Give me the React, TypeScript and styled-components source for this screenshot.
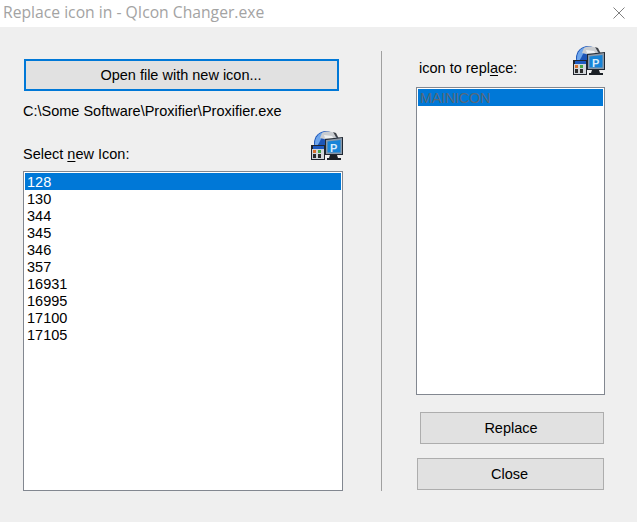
import React from "react";
import styled, { createGlobalStyle } from "styled-components";

const Global = createGlobalStyle`
  html, body { margin: 0; padding: 0; background: #efefef; }
  * { box-sizing: border-box; }
  body { font-family: "Liberation Sans", Arial, sans-serif; font-size: 14.5px; color: #000; }
`;

const Window = styled.div`
  width: 637px;
  height: 522px;
  display: flex;
  flex-direction: column;
  overflow: hidden;
  background: #efefef;
`;

const TitleBar = styled.div`
  height: 27px;
  flex: none;
  background: #fff;
  display: flex;
  align-items: center;
  justify-content: space-between;
  padding: 0 12px 3px 3px;
`;

const Title = styled.span`
  font-family: "Open Sans", sans-serif;
  font-size: 15.7px;
  color: #a3a3a3;
  line-height: 24px;
`;

const CloseGlyph = styled.svg`
  width: 12px;
  height: 12px;
  display: block;
  margin-top: 1px;
`;

const Body = styled.div`
  flex: 1;
  display: flex;
  align-items: flex-start;
  padding-left: 23px;
`;

const LeftColumn = styled.div`
  width: 320px;
  padding-top: 32px;
  display: flex;
  flex-direction: column;
`;

const Divider = styled.div`
  width: 1px;
  height: 440px;
  margin: 24px 34px 0 38px;
  background: #a0a0a0;
`;

const RightColumn = styled.div`
  width: 189px;
  padding-top: 19px;
  display: flex;
  flex-direction: column;
`;

const Button = styled.button<{ $w: number; $primary?: boolean }>`
  width: ${(p) => p.$w}px;
  height: 32px;
  align-self: flex-end;
  margin: 0;
  padding: 0 ${(p) => (p.$primary ? 1 : 2)}px 0 0;
  background: #e1e1e1;
  border: ${(p) => (p.$primary ? "2px solid #0078d7" : "1px solid #adadad")};
  font-family: "Liberation Sans", Arial, sans-serif;
  font-size: 14.5px;
  color: #000;
`;

const OpenButton = styled(Button)`
  align-self: flex-start;
  margin-left: 1px;
`;

const ReplaceButton = styled(Button)`
  margin: 17px 1px 0 0;
`;

const CloseButton = styled(Button)`
  margin: 14px 1px 0 0;
`;

const PathText = styled.div`
  margin-top: 12px;
  line-height: 17px;
`;

const ListHeader = styled.div<{ $h: number; $top: number }>`
  height: ${(p) => p.$h}px;
  padding-top: ${(p) => p.$top}px;
  display: flex;
  align-items: flex-start;
  justify-content: space-between;
`;

const Label = styled.label<{ $top: number; $left: number }>`
  margin: ${(p) => p.$top}px 0 0 ${(p) => p.$left}px;
  line-height: 17px;
`;

const Mnemonic = styled.u`
  text-underline-offset: 2px;
`;

const ListBox = styled.div<{ $h: number }>`
  height: ${(p) => p.$h}px;
  background: #fff;
  border: 1px solid #828790;
  padding: 1px;
`;

const Row = styled.div<{ $selected?: boolean; $dim?: boolean }>`
  height: 17px;
  line-height: 19px;
  padding-left: 2px;
  background: ${(p) => (p.$selected ? "#0078d7" : "transparent")};
  color: ${(p) => (p.$dim ? "#56687a" : p.$selected ? "#fff" : "#000")};
  letter-spacing: ${(p) => (p.$dim ? "-0.3px" : "0")};
  overflow: hidden;
`;

const IconSvg = styled.svg`
  display: block;
  flex: none;
  margin-right: -2px;
`;

const AppIcon = () => (
  <IconSvg width="34" height="30" viewBox="0 0 34 30" aria-hidden="true">
    <circle cx="15" cy="12" r="12" fill="#1c55b8" />
    <path d="M4 12C4 6 8 2 13 1l-2 5-3 6-2 3-2-1z" fill="#6ea6ec" />
    <path d="M11 2c4-2 10-2 13 1l3 8-6 0-8-3-4-1z" fill="#c9ccd0" />
    <path d="M22 1l3 1 3 6-3-2z" fill="#3e4248" />
    <path d="M13 4l8 1 2 3-9-1z" fill="#eef0f2" />
    <rect x="0" y="14" width="14" height="15" fill="#20242c" />
    <rect x="2" y="15" width="11" height="3" fill="#1d59c0" />
    <rect x="1" y="18" width="12" height="10" fill="#d2d6da" />
    <rect x="2" y="19" width="3" height="3" fill="#d9702c" />
    <rect x="7" y="19" width="3" height="3" fill="#48a648" />
    <rect x="2" y="23" width="3" height="4" fill="#2c2c2c" />
    <rect x="7" y="23" width="3" height="4" fill="#2c2c2c" />
    <path d="M14 8l18-2v18l-18 0z" fill="#1f2731" />
    <path d="M15 9l16-2v16h-16z" fill="#8a98a8" />
    <path d="M16.500 10.500l13-1.500v12.500h-13z" fill="#1784d8" />
    <text x="19" y="20.500" fontFamily="Liberation Sans" fontWeight="700" fontSize="11" fill="#d7ecfb">P</text>
    <path d="M19 24h7l1 3h3v2h-14v-2h2z" fill="#1b2026" />
  </IconSvg>
);

const leftItems = ["128", "130", "344", "345", "346", "357", "16931", "16995", "17100", "17105"];

export default function App() {
  return (
    <Window>
      <Global />
      <TitleBar>
        <Title>Replace icon in - QIcon Changer.exe</Title>
        <CloseGlyph viewBox="0 0 12 12">
          <path d="M0.5 0.5l11 11M11.5 0.5l-11 11" stroke="#808080" strokeWidth="1" fill="none" />
        </CloseGlyph>
      </TitleBar>
      <Body>
        <LeftColumn>
          <OpenButton $w={315} $primary>Open file with new icon...</OpenButton>
          <PathText>C:\Some Software\Proxifier\Proxifier.exe</PathText>
          <ListHeader $h={51} $top={11}>
            <Label $top={15} $left={0}>Select <Mnemonic>n</Mnemonic>ew Icon:</Label>
            <AppIcon />
          </ListHeader>
          <ListBox $h={320}>
            {leftItems.map((item, i) => (
              <Row key={item} $selected={i === 0}>{item}</Row>
            ))}
          </ListBox>
        </LeftColumn>
        <Divider />
        <RightColumn>
          <ListHeader $h={41} $top={0}>
            <Label $top={14} $left={3}>icon to repl<Mnemonic>a</Mnemonic>ce:</Label>
            <AppIcon />
          </ListHeader>
          <ListBox $h={308}>
            <Row $selected $dim>MAINICON</Row>
          </ListBox>
          <ReplaceButton $w={184}>Replace</ReplaceButton>
          <CloseButton $w={187}>Close</CloseButton>
        </RightColumn>
      </Body>
    </Window>
  );
}
